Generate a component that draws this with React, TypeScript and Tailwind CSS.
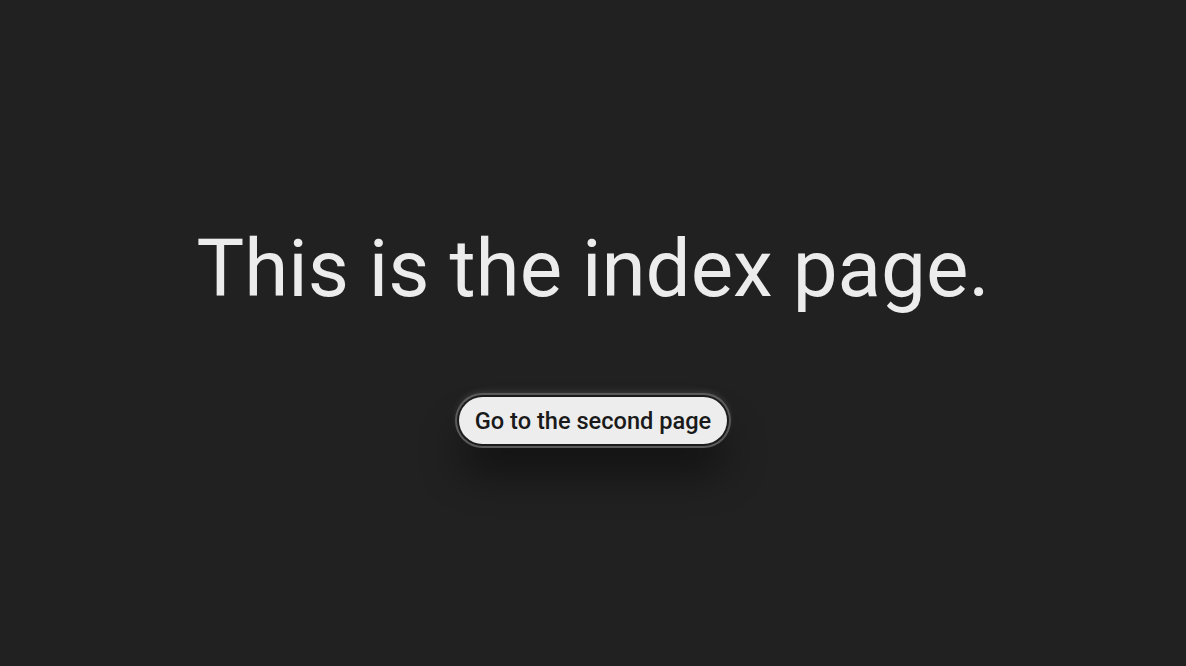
export default function App() {
  return (
    <div className="flex h-[666px] w-full flex-col items-center justify-center bg-[#212121] pt-[7px] font-['Roboto',sans-serif]">
      <h1 className="text-[80px] leading-none font-normal text-[#ececec]">This is the index page.</h1>
      <button
        type="button"
        className="mt-[88px] h-[47px] rounded-full bg-[#ededed] px-4 text-[23.6px] leading-7 font-medium text-[#1a1a1a] shadow-[0_0_0_2px_#1b1b1b,0_0_0_4px_#5a5a5a,0_-3px_8px_rgba(255,255,255,0.22),0_30px_40px_rgba(0,0,0,0.45)]"
      >
        Go to the second page
      </button>
    </div>
  );
}
